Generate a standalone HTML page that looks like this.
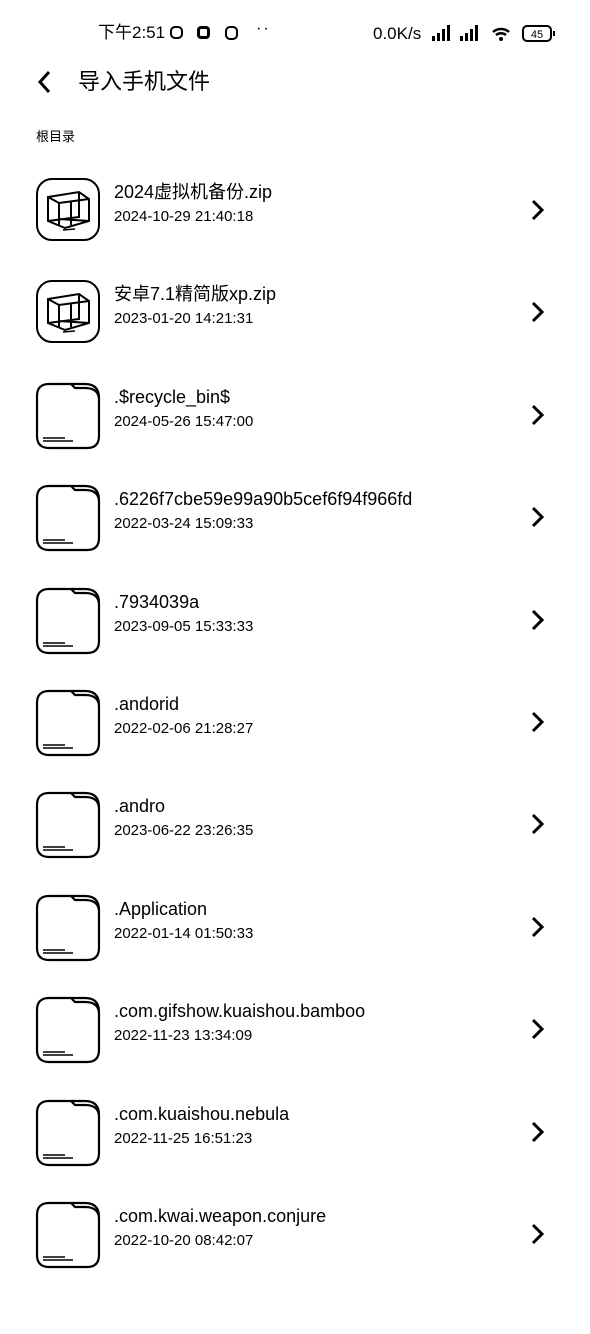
<!DOCTYPE html>
<html><head><meta charset="utf-8"><style>
body{margin:0;width:590px;height:1280px;background:#fff;font-family:"Liberation Sans","Noto Sans CJK SC",sans-serif;color:#000;position:relative;overflow:hidden}
.a{position:absolute;white-space:nowrap;line-height:1.15}
.row{position:absolute;left:0;width:590px;height:100px}
.name{position:absolute;left:114px;top:-29px;font-size:18px;line-height:22px;white-space:nowrap}
.date{position:absolute;left:114px;top:-3px;font-size:15px;line-height:20px;white-space:nowrap}
.ic{position:absolute;left:35px;top:-33px}
.chev{position:absolute;left:530px;top:-11px}
</style></head><body>
<div class="a" style="left:98px;top:23px;font-size:17px;line-height:20px">下午2:51</div>
<div class="a" style="left:170px;top:26px;width:13px;height:13px;border:2px solid #000;border-radius:5px;box-sizing:border-box"></div>
<div class="a" style="left:197px;top:26px;width:13px;height:13px;border:3px solid #000;border-radius:4px;box-sizing:border-box"></div>
<div class="a" style="left:225px;top:26px;width:13px;height:14px;border:2px solid #000;border-radius:5px;box-sizing:border-box"></div>
<div class="a" style="left:256px;top:20px;font-size:16px;letter-spacing:2px">··</div>
<div class="a" style="left:373px;top:24px;font-size:17px;line-height:20px">0.0K/s</div>
<svg class="a" style="left:430px;top:24px" width="130" height="22">
<rect x="2" y="12" width="3" height="5"/><rect x="7" y="9" width="3" height="8"/><rect x="12" y="5" width="3" height="12"/><rect x="17" y="1" width="3" height="16"/>
<rect x="30" y="12" width="3" height="5"/><rect x="35" y="9" width="3" height="8"/><rect x="40" y="5" width="3" height="12"/><rect x="45" y="1" width="3" height="16"/>
<path d="M63 8a12 12 0 0 1 16 0M66 11a8 8 0 0 1 10 0" stroke="#000" stroke-width="2.5" fill="none"/><circle cx="71" cy="15" r="2"/>
<rect x="93" y="2" width="28" height="15" rx="4" fill="none" stroke="#000" stroke-width="2"/><rect x="123" y="7" width="2" height="5"/>
<text x="107" y="14" font-size="11" text-anchor="middle" font-family="Liberation Sans">45</text>
</svg>
<svg class="a" style="left:36px;top:69px" width="18" height="26"><path d="M13 3 L4 13 L13 23" stroke="#000" stroke-width="3" fill="none"/></svg>
<div class="a" style="left:78px;top:68px;font-size:22px;line-height:28px">导入手机文件</div>
<div class="a" style="left:36px;top:129px;font-size:13px;line-height:16px">根目录</div>

<div id="list"></div>
<script>
var items=[["2024虚拟机备份.zip","2024-10-29 21:40:18",1],["安卓7.1精简版xp.zip","2023-01-20 14:21:31",1],[".$recycle_bin$","2024-05-26 15:47:00"],[".6226f7cbe59e99a90b5cef6f94f966fd","2022-03-24 15:09:33"],[".7934039a","2023-09-05 15:33:33"],[".andorid","2022-02-06 21:28:27"],[".andro","2023-06-22 23:26:35"],[".Application","2022-01-14 01:50:33"],[".com.gifshow.kuaishou.bamboo","2022-11-23 13:34:09"],[".com.kuaishou.nebula","2022-11-25 16:51:23"],[".com.kwai.weapon.conjure","2022-10-20 08:42:07"]];
var h="";
items.forEach(function(it,i){
var y=Math.round(210+i*102.4);
var icon=it[2]?
'<svg class="ic" width="68" height="66"><rect x="2" y="2" width="62" height="61" rx="15" fill="none" stroke="#000" stroke-width="2"/><path d="M13 20 L44 15 L54 22 L54 44 L30 51 L13 44 Z M13 20 L24 26 L54 22 M24 26 L24 48 M36 24 L36 48 M24 42 L54 44 M13 44 L44 40 L44 15" stroke="#000" stroke-width="2" fill="none"/><path d="M28 53 L40 52" stroke="#000" stroke-width="1.5"/></svg>'
:'<svg class="ic" width="68" height="68"><path d="M14 2 H36 L40 6 H50 Q64 6 64 18 V54 Q64 66 52 66 H14 Q2 66 2 54 V14 Q2 2 14 2 Z M36 2 H50 Q64 2 64 16" stroke="#000" stroke-width="2.2" fill="none"/><path d="M8 56 H30 M8 59 H38" stroke="#000" stroke-width="1.5"/></svg>';
h+='<div class="row" style="top:'+y+'px">'+icon+'<div class="name">'+it[0]+'</div><div class="date">'+it[1]+'</div><svg class="chev" width="16" height="22"><path d="M3 2 L12 11 L3 20" stroke="#000" stroke-width="3" fill="none"/></svg></div>';
});
document.getElementById("list").innerHTML=h;
</script>
</body></html>
